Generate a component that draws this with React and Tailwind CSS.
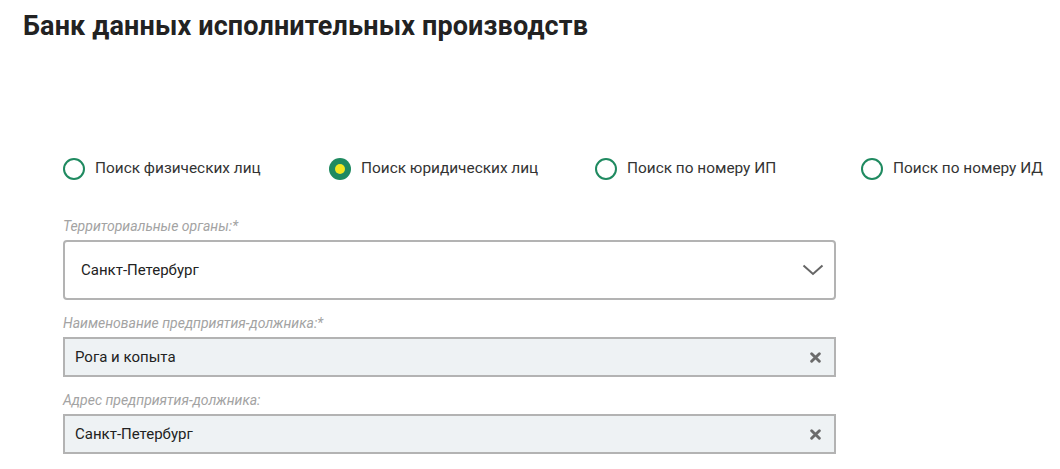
const font = { fontFamily: 'Roboto, "Noto Sans", sans-serif' }

const options = [
  { label: 'Поиск физических лиц', checked: false },
  { label: 'Поиск юридических лиц', checked: true },
  { label: 'Поиск по номеру ИП', checked: false },
  { label: 'Поиск по номеру ИД', checked: false },
]

function Radio({ label, checked }) {
  return (
    <label className="flex items-center gap-[10px] w-[266px] shrink-0">
      {checked ? (
        <span className="w-[22px] h-[22px] rounded-full bg-[#1f8a60] flex items-center justify-center shrink-0">
          <span className="w-[10px] h-[10px] rounded-full bg-[#f2e620]" />
        </span>
      ) : (
        <span className="w-[22px] h-[22px] rounded-full border-[2.5px] border-[#1f8a60] shrink-0" />
      )}
      <span className="text-[15.4px] text-[#333] whitespace-nowrap">{label}</span>
    </label>
  )
}

function FieldLabel({ children }) {
  return <div className="text-[14px] italic text-[#a3a3a3] leading-[16px] mb-[6px]">{children}</div>
}

function ClearInput({ value }) {
  return (
    <div className="h-[40px] border-2 border-[#b3b3b3] bg-[#eef2f4] flex items-center justify-between pl-[10px] pr-[12px]">
      <span className="text-[15px] text-[#222]">{value}</span>
      <svg width="11" height="11" viewBox="0 0 10 10" className="mr-[1px]">
        <path d="M1.5 1.5 L8.5 8.5 M8.5 1.5 L1.5 8.5" stroke="#6b6b6b" strokeWidth="2.6" strokeLinecap="round" />
      </svg>
    </div>
  )
}

export default function App() {
  return (
    <div className="w-[1060px] h-[469px] bg-white overflow-hidden" style={font}>
      <h1 className="pl-[23px] pt-[10px] text-[27px] tracking-[0.15px] leading-[32px] font-bold text-[#222]">
        Банк данных исполнительных производств
      </h1>

      <div className="pl-[63px]">
        <div className="flex mt-[116px] h-[22px] items-center">
          {options.map((o) => <Radio key={o.label} {...o} />)}
        </div>

        <div className="w-[773px] mt-[38px]">
          <FieldLabel>Территориальные органы:*</FieldLabel>
          <div className="h-[60px] border-2 border-[#b3b3b3] rounded-[4px] flex items-center justify-between pl-[16px] pr-[10px]">
            <span className="text-[15px] text-[#222]">Санкт-Петербург</span>
            <svg width="22" height="12" viewBox="0 0 22 12">
              <path d="M1.5 1.5 L11 10 L20.5 1.5" fill="none" stroke="#666" strokeWidth="2" />
            </svg>
          </div>

          <div className="mt-[15px]">
            <FieldLabel>Наименование предприятия-должника:*</FieldLabel>
            <ClearInput value="Рога и копыта" />
          </div>

          <div className="mt-[15px]">
            <FieldLabel>Адрес предприятия-должника:</FieldLabel>
            <ClearInput value="Санкт-Петербург" />
          </div>
        </div>
      </div>
    </div>
  )
}
